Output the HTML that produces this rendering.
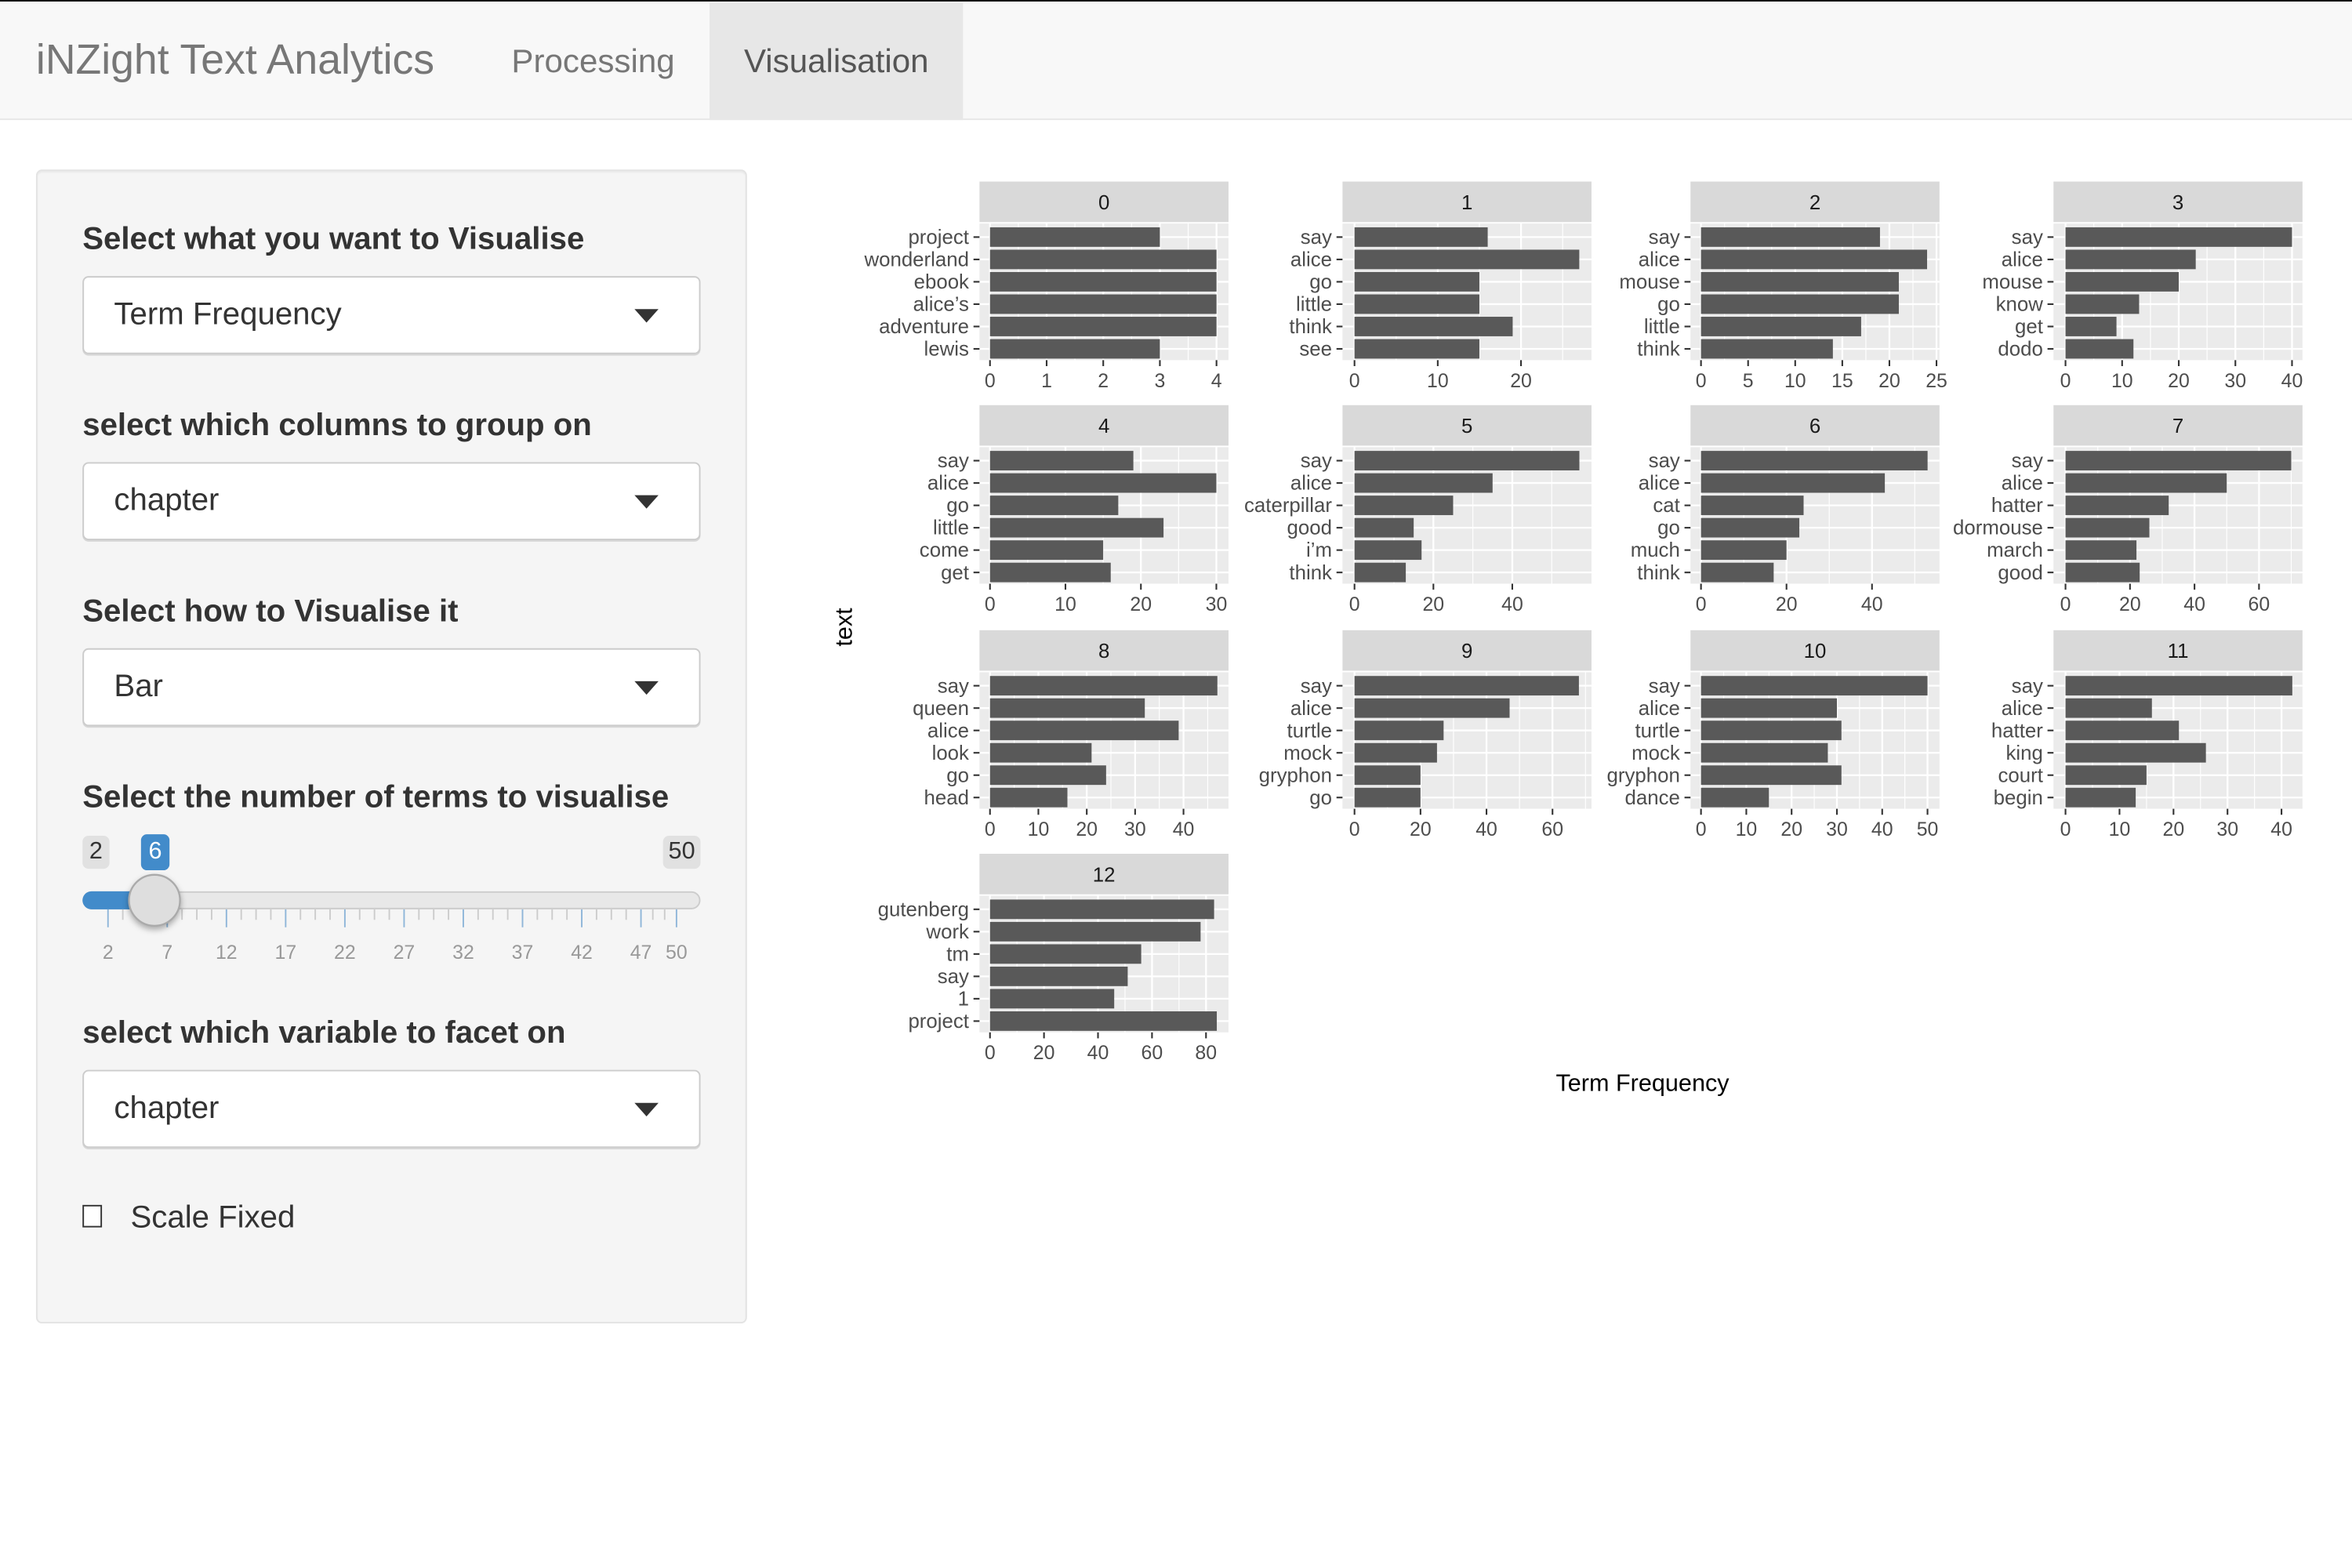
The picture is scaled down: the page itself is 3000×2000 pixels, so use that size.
<!DOCTYPE html>
<html><head><meta charset="utf-8">
<style>
html,body{margin:0;padding:0;background:#fff;width:3000px;height:2000px;overflow:hidden}
#root{position:absolute;left:0;top:0;width:1568px;height:1045px;transform:scale(1.91327,1.9139);transform-origin:0 0;font-family:"Liberation Sans",Arial,sans-serif;color:#333}
.nav{position:absolute;left:0;top:0;width:1568px;height:80px;background:#f8f8f8;border-top:1px solid #000;border-bottom:1px solid #e7e7e7;box-sizing:border-box}
.brand{position:absolute;left:24px;top:23px;font-size:28px;color:#777}
.tab{position:absolute;top:27px;font-size:22px;color:#777}
.active{position:absolute;left:473px;top:1px;width:169px;height:78px;background:#e7e7e7}
.well{position:absolute;left:24px;top:113px;width:474px;height:769px;background:#f5f5f5;border:1px solid #e3e3e3;border-radius:4px;box-sizing:border-box;box-shadow:inset 0 1px 1px rgba(0,0,0,.05)}
.lbl{position:absolute;left:55px;font-size:21px;font-weight:bold;color:#333}
.sel{position:absolute;left:55px;width:412px;height:52px;background:#fff;border:1px solid #ccc;border-radius:4px;box-sizing:border-box;font-size:21px;color:#333;padding:13px 0 0 20px;box-shadow:0 1px 0 rgba(0,0,0,.12)}
.sel:after{content:"";position:absolute;right:27px;top:21px;border-left:8px solid transparent;border-right:8px solid transparent;border-top:9px solid #333}
.badge{position:absolute;top:557px;height:22px;background:#e1e1e1;border-radius:4px;font-size:16px;color:#333;text-align:center;line-height:22px}
</style></head><body>
<div id="root">
<div class="nav">
  <div class="active"></div>
  <div class="brand">iNZight Text Analytics</div>
  <div class="tab" style="left:341px">Processing</div>
  <div class="tab" style="left:496px;color:#555">Visualisation</div>
</div>
<div class="well"></div>
<div class="lbl" style="top:148px">Select what you want to Visualise</div>
<div class="sel" style="top:184px">Term Frequency</div>
<div class="lbl" style="top:272px">select which columns to group on</div>
<div class="sel" style="top:308px">chapter</div>
<div class="lbl" style="top:396px">Select how to Visualise it</div>
<div class="sel" style="top:432px">Bar</div>
<div class="lbl" style="top:520px">Select the number of terms to visualise</div>
<div class="badge" style="left:55px;width:18px">2</div>
<div class="badge" style="left:94px;width:19px;background:#428bca;color:#fff;top:556px;height:24px;line-height:24px">6</div>
<div class="badge" style="left:442px;width:25px">50</div>
<svg style="position:absolute;left:0;top:0" width="520" height="660" viewBox="0 0 520 660">
  <rect x="55.5" y="594.5" width="411" height="11" rx="5.5" fill="#e8e8e8" stroke="#cccccc"/>
  <rect x="55" y="594" width="50" height="12" rx="6" fill="#428bca"/>
  <g id="sticks"></g>
  <g id="slabels" font-size="13" fill="#999" text-anchor="middle"></g>
  <circle cx="103" cy="600" r="17" fill="#dedede" stroke="#aaa" stroke-width="1.2" style="filter:drop-shadow(0 2px 2px rgba(0,0,0,.3))"/>
</svg>
<div class="lbl" style="top:677px;">select which variable to facet on</div>
<div class="sel" style="top:713px">chapter</div>
<div style="position:absolute;left:55px;top:803px;width:11px;height:13px;border:1px solid #333;background:#fff"></div>
<div style="position:absolute;left:87px;top:800px;font-size:21px;color:#333">Scale Fixed</div>

<svg id="plot" style="position:absolute;left:0;top:0" width="1568" height="1045" viewBox="0 0 1568 1045" font-family="Liberation Sans, Arial, sans-serif"></svg>
</div>
<script>
(function(){
var ns="http://www.w3.org/2000/svg";
function el(p,t,a,txt){var e=document.createElementNS(ns,t);for(var k in a)e.setAttribute(k,a[k]);if(txt!==undefined)e.textContent=txt;p.appendChild(e);return e;}
var st=document.getElementById('sticks'),sl=document.getElementById('slabels');
var x0=72,x1=451;
var pos=[];
for(var i=0;i<=9;i++){pos.push(2+5*i);}
pos.push(50);
pos.forEach(function(v){var x=x0+(v-2)*(x1-x0)/48;el(st,'line',{x1:x,x2:x,y1:606,y2:618,stroke:'#8fb6d9','stroke-width':1});el(sl,'text',{x:x,y:639},String(v));});
for(var i=0;i<9;i++){for(var j=1;j<=3;j++){var v=2+5*i+j*1.25;var x=x0+(v-2)*(x1-x0)/48;el(st,'line',{x1:x,x2:x,y1:606,y2:613,stroke:'#ccc','stroke-width':1});}}
[48,49].forEach(function(v){var x=x0+(v-2)*(x1-x0)/48;el(st,'line',{x1:x,x2:x,y1:606,y2:613,stroke:'#ccc','stroke-width':1});});

var svg=document.getElementById('plot');
var cols=[653,895,1127,1369],rows=[121,270,420,569];
var P=[
 {l:['project','wonderland','ebook','alice\u2019s','adventure','lewis'],z:660,s:37.75,t:[0,1,2,3,4],m:0.5,v:[3,4,4,4,4,3]},
 {l:['say','alice','go','little','think','see'],z:903,s:5.55,t:[0,10,20],m:5,v:[16,27,15,15,19,15]},
 {l:['say','alice','mouse','go','little','think'],z:1134,s:6.28,t:[0,5,10,15,20,25],m:2.5,v:[19,24,21,21,17,14]},
 {l:['say','alice','mouse','know','get','dodo'],z:1377,s:3.775,t:[0,10,20,30,40],m:5,v:[40,23,20,13,9,12]},
 {l:['say','alice','go','little','come','get'],z:660,s:5.03,t:[0,10,20,30],m:5,v:[19,30,17,23,15,16]},
 {l:['say','alice','caterpillar','good','i\u2019m','think'],z:903,s:2.63,t:[0,20,40],m:10,v:[57,35,25,15,17,13]},
 {l:['say','alice','cat','go','much','think'],z:1134,s:2.85,t:[0,20,40],m:10,v:[53,43,24,23,20,17]},
 {l:['say','alice','hatter','dormouse','march','good'],z:1377,s:2.15,t:[0,20,40,60],m:10,v:[70,50,32,26,22,23]},
 {l:['say','queen','alice','look','go','head'],z:660,s:3.225,t:[0,10,20,30,40],m:5,v:[47,32,39,21,24,16]},
 {l:['say','alice','turtle','mock','gryphon','go'],z:903,s:2.2,t:[0,20,40,60],m:10,v:[68,47,27,25,20,20]},
 {l:['say','alice','turtle','mock','gryphon','dance'],z:1134,s:3.02,t:[0,10,20,30,40,50],m:5,v:[50,30,31,28,31,15]},
 {l:['say','alice','hatter','king','court','begin'],z:1377,s:3.6,t:[0,10,20,30,40],m:5,v:[42,16,21,26,15,13]},
 {l:['gutenberg','work','tm','say','1','project'],z:660,s:1.8,t:[0,20,40,60,80],m:10,v:[83,78,56,51,46,84]}
];
P.forEach(function(p,i){
  var X=cols[i%4],Y=rows[Math.floor(i/4)],W=166;
  el(svg,'rect',{x:X,y:Y,width:W,height:27,fill:'#d9d9d9'});
  el(svg,'text',{x:X+W/2,y:Y+18.5,'font-size':13.5,fill:'#1a1a1a','text-anchor':'middle'},String(i));
  var py=Y+28,ph=91;
  el(svg,'rect',{x:X,y:py,width:W,height:ph,fill:'#ebebeb'});
  var maxv=(X+W-p.z)/p.s;
  for(var v=p.m;v<maxv;v+=p.m*2){var x=p.z+v*p.s;el(svg,'line',{x1:x,x2:x,y1:py,y2:py+ph,stroke:'#fff','stroke-width':0.6});}
  p.t.forEach(function(v){var x=p.z+v*p.s;el(svg,'line',{x1:x,x2:x,y1:py,y2:py+ph,stroke:'#fff','stroke-width':1.2});
    el(svg,'line',{x1:x,x2:x,y1:py+ph,y2:py+ph+4,stroke:'#333','stroke-width':1.1});
    el(svg,'text',{x:x,y:py+ph+18,'font-size':13,fill:'#4d4d4d','text-anchor':'middle'},String(v));});
  for(var k=0;k<6;k++){
    var cy=Y+37+k*14.9;
    el(svg,'line',{x1:X,x2:X+W,y1:cy,y2:cy,stroke:'#fff','stroke-width':1.2});
    el(svg,'rect',{x:p.z,y:cy-6.5,width:p.v[k]*p.s,height:13,fill:'#595959'});
    el(svg,'line',{x1:X-4,x2:X,y1:cy,y2:cy,stroke:'#333','stroke-width':1.1});
    el(svg,'text',{x:X-7,y:cy+4.5,'font-size':13.5,fill:'#4d4d4d','text-anchor':'end'},p.l[k]);
  }
});
el(svg,'text',{x:1095,y:727,'font-size':16,fill:'#000','text-anchor':'middle'},'Term Frequency');
el(svg,'text',{x:0,y:0,'font-size':16,fill:'#000','text-anchor':'middle',transform:'translate(568,418) rotate(-90)'},'text');
})();
</script>
</body></html>
